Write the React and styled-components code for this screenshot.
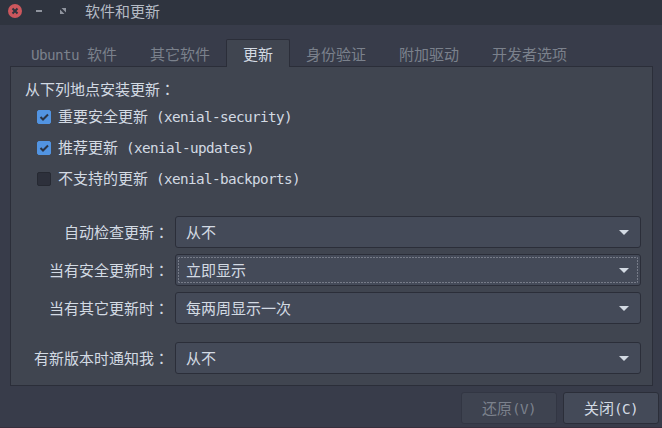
import React from 'react';
import styled, { createGlobalStyle, css, ThemeProvider } from 'styled-components';

const theme = {
  titleBar: '#2f343f',
  window: '#383c4a',
  panel: '#404550',
  control: '#444a58',
  border: '#2b2e39',
  text: '#d3dae3',
  muted: '#7b818c',
  accent: '#5294e2',
  close: '#cc575d',
};

const GlobalStyle = createGlobalStyle`
  * {
    box-sizing: border-box;
  }

  body {
    margin: 0;
    overflow: hidden;
    background: #383c4a;
  }
`;

const Window = styled.div`
  width: 662px;
  height: 428px;
  display: flex;
  flex-direction: column;
  background: ${(props) => props.theme.window};
  border-bottom: 1px solid #372f3d;
  color: ${(props) => props.theme.text};
  font-family: 'Noto Sans CJK SC', sans-serif;
  font-size: 15px;
  line-height: 22px;
  white-space: pre;
`;

const Latin = styled.span`
  font-family: 'DejaVu Sans Mono', monospace;
  font-size: 14.3px;
  letter-spacing: -0.61px;
  line-height: 1;
`;

// The JP face centres the full-width colon in its cell
const Colon = styled.span`
  font-family: 'Noto Sans CJK JP', sans-serif;
  line-height: 1;
`;

const TitleBar = styled.header`
  height: 25px;
  display: flex;
  align-items: flex-start;
  padding-left: 8px;
  background: ${(props) => props.theme.titleBar};
`;

const Controls = styled.svg`
  display: block;
  width: 60px;
  height: 25px;
`;

const Title = styled.h1`
  margin: 0 0 0 17px;
  font-size: 15px;
  font-weight: 400;
  color: #b5bbc5;
`;

const Tabs = styled.nav`
  height: 42px;
  display: flex;
  align-items: flex-end;
  padding-left: 14px;
  margin-bottom: -1px;
  z-index: 1;
`;

const Tab = styled.div`
  height: 28px;
  margin-right: -1px;
  padding: 3px 16px 0;
  border: 1px solid ${(props) => (props.$active ? props.theme.border : 'transparent')};
  border-bottom: 0;
  border-radius: 2px 2px 0 0;
  background: ${(props) => (props.$active ? props.theme.panel : 'transparent')};
  color: ${(props) => (props.$active ? props.theme.text : props.theme.muted)};
`;

const Panel = styled.main`
  width: 643px;
  height: 320px;
  margin-left: 10px;
  padding: 11px 11px 0 13px;
  border: 1px solid ${(props) => props.theme.border};
  background: ${(props) => props.theme.panel};
`;

const Heading = styled.div`
  padding-left: 1px;
`;

const Sources = styled.div`
  display: flex;
  flex-direction: column;
  gap: 9px;
  margin: 6px 0 26px 13px;
`;

const CheckRow = styled.div`
  height: 22px;
  display: flex;
  align-items: center;
  gap: 7px;
`;

const SourceName = styled.span`
  margin-top: -2px;
`;

const Box = styled.span`
  width: 14px;
  height: 14px;
  border: 1px solid ${(props) => (props.$checked ? props.theme.accent : '#262932')};
  border-radius: 2px;
  background: ${(props) => (props.$checked ? props.theme.accent : '#2d303b')};

  svg {
    display: block;
  }
`;

const Field = styled.div`
  display: flex;
  align-items: center;
  margin-top: ${(props) => (props.$spaced ? '18px' : '6px')};
`;

const Label = styled.div`
  width: 151px;
  padding-right: 6px;
  text-align: right;
`;

const Select = styled.div`
  width: 466px;
  height: 32px;
  padding: 2px;
  border: 1px solid ${(props) => props.theme.border};
  border-radius: 3px;
  background: ${(props) => props.theme.control};
`;

// 2px dashes with 1px gaps, finer than a dashed border
const focusRing = css`
  background:
    repeating-linear-gradient(90deg, #767b88 0 2px, transparent 2px 3px) top / 100% 1px,
    repeating-linear-gradient(90deg, #767b88 0 2px, transparent 2px 3px) bottom / 100% 1px,
    repeating-linear-gradient(#767b88 0 2px, transparent 2px 3px) left / 1px 100%,
    repeating-linear-gradient(#767b88 0 2px, transparent 2px 3px) right / 1px 100%;
  background-repeat: no-repeat;
`;

const SelectInner = styled.div`
  height: 26px;
  display: flex;
  align-items: center;
  justify-content: space-between;
  padding: 0 9px 0 8px;
  border-radius: 1px;
  ${(props) => props.$focused && focusRing}
`;

const Actions = styled.footer`
  display: flex;
  justify-content: flex-end;
  gap: 6px;
  padding: 6px 3px 0 0;
`;

const Button = styled.button`
  width: 96px;
  height: 32px;
  padding: 0;
  border: 1px solid ${(props) => (props.disabled ? '#323643' : props.theme.border)};
  border-radius: 3px;
  background: ${(props) => (props.disabled ? '#3e4350' : props.theme.control)};
  color: ${(props) => (props.disabled ? props.theme.muted : props.theme.text)};
  font: inherit;
`;

const sources = [
  { name: '重要安全更新', repo: ' (xenial-security)', checked: true },
  { name: '推荐更新', repo: ' (xenial-updates)', checked: true },
  { name: '不支持的更新', repo: ' (xenial-backports)', checked: false },
];

const fields = [
  { label: '自动检查更新', value: '从不' },
  { label: '当有安全更新时', value: '立即显示', focused: true },
  { label: '当有其它更新时', value: '每两周显示一次' },
  { label: '有新版本时通知我', value: '从不', spaced: true },
];

const WindowControls = () => (
  <Controls viewBox="0 0 60 25">
    <circle cx="7" cy="11" r="7" fill={theme.close} />
    <path d="M4.5 8.5l5 5m0-5l-5 5" stroke="#2f343f" strokeWidth="2" />
    <path d="M28 11h6" stroke="#90959f" strokeWidth="2" />
    <path d="M53.5 8H58v4.500zM52 9.500V14h4.500z" fill="#90959f" />
  </Controls>
);

const Check = () => (
  <svg width="12" height="12" viewBox="0 0 12 12">
    <path d="M2.5 6l2.500 2.500L10 3.500" fill="none" stroke="#2b3445" strokeWidth="2" />
  </svg>
);

const Arrow = () => (
  <svg width="10" height="5" viewBox="0 0 10 5">
    <path d="M0 0h10L5 5z" fill={theme.text} />
  </svg>
);

const App = () => (
  <ThemeProvider theme={theme}>
    <GlobalStyle />
    <Window>
      <TitleBar>
        <WindowControls />
        <Title>软件和更新</Title>
      </TitleBar>
      <Tabs>
        <Tab><Latin>Ubuntu </Latin>软件</Tab>
        <Tab>其它软件</Tab>
        <Tab $active>更新</Tab>
        <Tab>身份验证</Tab>
        <Tab>附加驱动</Tab>
        <Tab>开发者选项</Tab>
      </Tabs>
      <Panel>
        <Heading>从下列地点安装更新<Colon>：</Colon></Heading>
        <Sources>
          {sources.map(({ name, repo, checked }) => (
            <CheckRow key={name}>
              <Box $checked={checked}>{checked && <Check />}</Box>
              <SourceName>{name}<Latin>{repo}</Latin></SourceName>
            </CheckRow>
          ))}
        </Sources>
        {fields.map(({ label, value, focused, spaced }) => (
          <Field key={label} $spaced={spaced}>
            <Label>{label}<Colon>：</Colon></Label>
            <Select>
              <SelectInner $focused={focused}>
                {value}
                <Arrow />
              </SelectInner>
            </Select>
          </Field>
        ))}
      </Panel>
      <Actions>
        <Button disabled>还原<Latin>(V)</Latin></Button>
        <Button>关闭<Latin>(C)</Latin></Button>
      </Actions>
    </Window>
  </ThemeProvider>
);

export default App;
